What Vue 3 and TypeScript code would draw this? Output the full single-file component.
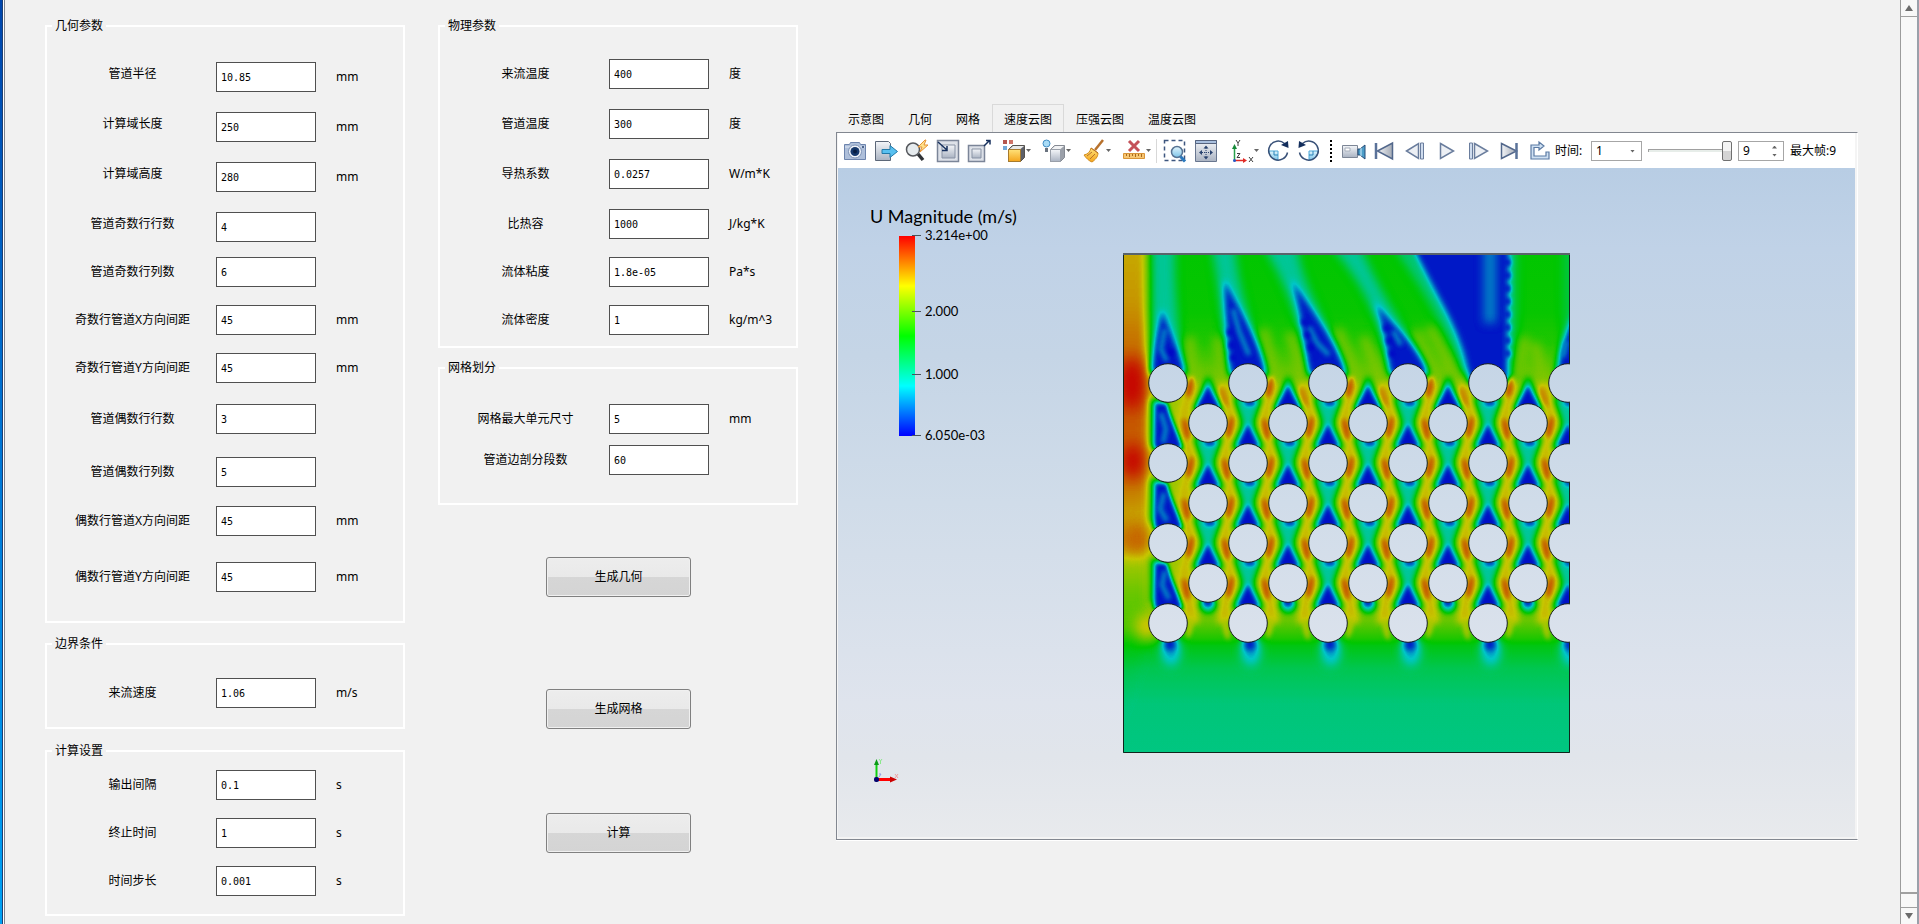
<script setup lang="ts">
import { ref } from 'vue'

interface Field {
  id: string
  label: string
  value: string
  unit?: string
  raised?: boolean
}
interface Group {
  key: string
  title: string
  fields: Field[]
}

const leftGroups = ref<Group[]>([
  {
    key: 'geometry',
    title: '几何参数',
    fields: [
      { id: 'radius', label: '管道半径', value: '10.85', unit: 'mm', raised: true },
      { id: 'length', label: '计算域长度', value: '250', unit: 'mm', raised: true },
      { id: 'height', label: '计算域高度', value: '280', unit: 'mm', raised: true },
      { id: 'odd-rows', label: '管道奇数行行数', value: '4', raised: true },
      { id: 'odd-cols', label: '管道奇数行列数', value: '6' },
      { id: 'odd-dx', label: '奇数行管道X方向间距', value: '45', unit: 'mm' },
      { id: 'odd-dy', label: '奇数行管道Y方向间距', value: '45', unit: 'mm' },
      { id: 'even-rows', label: '管道偶数行行数', value: '3' },
      { id: 'even-cols', label: '管道偶数行列数', value: '5' },
      { id: 'even-dx', label: '偶数行管道X方向间距', value: '45', unit: 'mm' },
      { id: 'even-dy', label: '偶数行管道Y方向间距', value: '45', unit: 'mm' },
    ],
  },
  {
    key: 'boundary',
    title: '边界条件',
    fields: [{ id: 'inlet-v', label: '来流速度', value: '1.06', unit: 'm/s' }],
  },
  {
    key: 'solver',
    title: '计算设置',
    fields: [
      { id: 'interval', label: '输出间隔', value: '0.1', unit: 's' },
      { id: 'end-time', label: '终止时间', value: '1', unit: 's' },
      { id: 'step', label: '时间步长', value: '0.001', unit: 's' },
    ],
  },
])

const midGroups = ref<Group[]>([
  {
    key: 'physics',
    title: '物理参数',
    fields: [
      { id: 'inlet-t', label: '来流温度', value: '400', unit: '度' },
      { id: 'pipe-t', label: '管道温度', value: '300', unit: '度' },
      { id: 'conduct', label: '导热系数', value: '0.0257', unit: 'W/m*K' },
      { id: 'heat', label: '比热容', value: '1000', unit: 'J/kg*K' },
      { id: 'viscosity', label: '流体粘度', value: '1.8e-05', unit: 'Pa*s' },
      { id: 'density', label: '流体密度', value: '1', unit: 'kg/m^3' },
    ],
  },
  {
    key: 'mesh',
    title: '网格划分',
    fields: [
      { id: 'cell', label: '网格最大单元尺寸', value: '5', unit: 'mm' },
      { id: 'segments', label: '管道边剖分段数', value: '60' },
    ],
  },
])

const tabs = ['示意图', '几何', '网格', '速度云图', '压强云图', '温度云图']
const activeTab = ref('速度云图')
const frame = ref(9)
const frameText = ref('9')
const timeValue = ref('1')

/* Scalar field: shapes are painted in grey levels, then a transfer table turns grey into the rainbow map. */
const tone = (v: number): string => {
  const n = Math.round(v * 255)
  return `rgb(${n},${n},${n})`
}
const vertical = (stops: [number, number][]) => stops.map(([o, v]) => ({ offset: o, color: tone(v) }))

const baseStops = vertical([
  [0, 0.5], [0.12, 0.51], [0.18, 0.54], [0.23, 0.62], [0.28, 0.7], [0.7, 0.7], [0.74, 0.62],
  [0.77, 0.54], [0.785, 0.48], [0.83, 0.4], [0.9, 0.348], [1, 0.338],
])
const wallStops = vertical([
  [0, 0.79], [0.1, 0.81], [0.2, 0.87], [0.3, 0.9], [0.46, 0.86], [0.52, 0.8], [0.58, 0.84],
  [0.62, 0.7], [0.68, 0.63], [0.75, 0.6], [0.78, 0.5], [0.84, 0.4], [0.92, 0.345], [1, 0.338],
])

interface Tube { x: number; y: number }
const oddX = [45, 125, 205, 285, 365, 445]
const oddY = [130, 210, 290, 370]
const evenX = [85, 165, 245, 325, 405]
const evenY = [170, 250, 330]
const tubes: Tube[] = [
  ...oddY.flatMap((y) => oddX.map((x) => ({ x, y }))),
  ...evenY.flatMap((y) => evenX.map((x) => ({ x, y }))),
]
const wakes: Tube[] = [
  ...[170, 250, 330].flatMap((y) => oddX.slice(1).map((x) => ({ x, y }))),
  ...[210, 290].flatMap((y) => evenX.map((x) => ({ x, y }))),
]
const hotSpots = tubes.flatMap((t) => {
  const spots: { x: number; y: number; v: number; turn: number }[] = []
  const last = t.y === 370
  const first = t.y === 130
  const v = last ? 0.72 : 0.9
  if (t.x > 50 && !first) spots.push({ x: t.x - 22, y: t.y + 6, v, turn: -12 })
  if (t.x < 440) spots.push({ x: t.x + 22, y: t.y + 4, v, turn: 12 })
  if (first && t.x > 50) spots.push({ x: t.x - 24, y: t.y + 14, v: 0.84, turn: -20 })
  return spots
})
const channels = Array.from({ length: 10 }, (_, k) => {
  const m = 65 + 40 * k
  let d = ''
  for (let i = 0; i <= 6; i++) {
    const y = 370 - 40 * i
    const nearLeft = (k % 2 === 0) === (i % 2 === 0)
    const x = nearLeft ? m + 4 : m - 4
    if (i === 0) d = `M${x} ${y}`
    else {
      const px = nearLeft ? m - 4 : m + 4
      d += ` C${px} ${y + 26} ${x} ${y + 14} ${x} ${y}`
    }
  }
  return d
})
const plumes = [
  'M39 56 C36 72 31 92 28 120 L63 120 C56 98 47 78 39 56Z',
  'M101 26 C101 55 105 85 107 122 L144 122 C138 90 116 55 101 26Z',
  'M168 26 C176 52 181 85 186 122 L224 122 C216 92 188 55 168 26Z',
  'M251 48 C260 70 264 90 267 122 L306 122 C298 96 270 72 251 48Z',
  'M286 -12 C300 18 314 42 324 62 C337 88 343 108 346 130 L386 130 C385 90 386 40 387 -12Z',
  'M456 50 C446 72 438 88 433 122 L460 122Z',
]
const streaks = [
  'M28 -10 C30 30 28 60 29 118 L62 118 C56 80 50 40 52 -10Z',
  'M88 -10 C96 30 100 70 104 118 L142 118 C132 80 112 30 112 -10Z',
  'M138 -10 C158 20 176 62 186 118 L222 118 C208 75 176 30 174 -10Z',
  'M205 -10 C238 26 258 66 266 118 L304 118 C290 84 260 50 236 -10Z',
]
const flecks = [
  'M42 76 L38 96 L44 108', 'M110 56 L116 78 L126 102', 'M186 74 L194 90 L206 102',
  'M270 78 L278 92', 'M444 88 L440 104', 'M38 160 L43 176 L40 190', 'M41 240 L37 256 L44 268',
  'M42 318 L39 332 L46 346',
]
const darkFlecks = ['M47 96 L52 108', 'M106 76 L110 108', 'M180 66 L190 104', 'M262 72 L270 106', 'M385 6 V110']
const ticks = [
  { y: 0, text: '3.214e+00' },
  { y: 76, text: '2.000' },
  { y: 139, text: '1.000' },
  { y: 200, text: '6.050e-03' },
]
</script>

<template>
  <div class="app">
    <div class="window-edge"></div>
    <main class="content">
      <form class="column" @submit.prevent>
        <fieldset v-for="g in leftGroups" :key="g.key" class="group" :class="g.key">
          <legend>{{ g.title }}</legend>
          <div class="rows">
            <template v-for="f in g.fields" :key="f.id">
              <label :for="f.id" :class="{ raised: f.raised }">{{ f.label }}</label>
              <input :id="f.id" v-model="f.value" type="text" />
              <span class="unit">{{ f.unit }}</span>
            </template>
          </div>
        </fieldset>
      </form>

      <div class="column">
        <fieldset v-for="g in midGroups" :key="g.key" class="group" :class="g.key">
          <legend>{{ g.title }}</legend>
          <div class="rows">
            <template v-for="f in g.fields" :key="f.id">
              <label :for="f.id">{{ f.label }}</label>
              <input :id="f.id" v-model="f.value" type="text" />
              <span class="unit">{{ f.unit }}</span>
            </template>
          </div>
        </fieldset>
        <div class="actions">
          <button type="button">生成几何</button>
          <button type="button">生成网格</button>
          <button type="button">计算</button>
        </div>
      </div>

      <section class="viewer">
        <div class="tabs" role="tablist">
          <button
            v-for="t in tabs"
            :key="t"
            type="button"
            role="tab"
            :aria-selected="t === activeTab"
            :class="{ active: t === activeTab }"
            @click="activeTab = t"
          >{{ t }}</button>
        </div>

        <div class="frame">
          <div class="toolbar">
            <svg class="defs" width="0" height="0" aria-hidden="true">
              <defs>
                <linearGradient id="steel" x1="0" y1="0" x2="0" y2="1">
                  <stop offset="0" stop-color="#f4f6f9" /><stop offset="1" stop-color="#aab3c2" />
                </linearGradient>
                <linearGradient id="gold" x1="0" y1="0" x2="0" y2="1">
                  <stop offset="0" stop-color="#ffe27a" /><stop offset="1" stop-color="#f4a51c" />
                </linearGradient>
                <linearGradient id="sky" x1="0" y1="0" x2="0" y2="1">
                  <stop offset="0" stop-color="#e3f5fd" /><stop offset="1" stop-color="#7cc4e8" />
                </linearGradient>
                <linearGradient id="side" x1="0" y1="0" x2="1" y2="0">
                  <stop offset="0" stop-color="#f2f4f7" /><stop offset="1" stop-color="#a4aab5" />
                </linearGradient>
              </defs>
            </svg>
            <div class="tools">
              <button type="button" class="tool" aria-label="截图">
                <svg viewBox="0 0 24 24">
                  <path d="M1.500 5.500h5l1-2h9l1 2h5v15h-21z" fill="#aebfda" stroke="#6d84ad" />
                  <path d="M2 8h20" stroke="#dfe7f3" />
                  <circle cx="12" cy="12.500" r="6.500" fill="#f0f4fa" stroke="#7f93b6" />
                  <circle cx="12" cy="12.500" r="4.500" fill="#16386c" />
                  <circle cx="12" cy="12.500" r="2" fill="#071d42" />
                  <circle cx="20" cy="8" r="1" fill="#24406f" />
                </svg>
              </button>
              <button type="button" class="tool" aria-label="导出">
                <svg viewBox="0 0 24 24">
                  <path d="M1.500 2.500h13l2 2v17h-15z" fill="url(#steel)" stroke="#5c6778" />
                  <path d="M8 10.500h8v-4l7.500 6-7.500 6v-4h-8z" fill="#58c0f0" stroke="#2279a8" />
                </svg>
              </button>
              <button type="button" class="tool" aria-label="快速缩放">
                <svg viewBox="0 0 24 24">
                  <path d="M13 15l5 6" stroke="#303236" stroke-width="3.500" />
                  <circle cx="8" cy="10.500" r="6.500" fill="#e6ebee" stroke="#55585d" stroke-width="1.500" />
                  <path d="M20 1l-7 7h4l-2 5 8-7h-4l2-5z" fill="#ffe08a" stroke="#e59136" />
                </svg>
              </button>
              <button type="button" class="tool" aria-label="缩小视图">
                <svg viewBox="0 0 24 24">
                  <path d="M1.500 1.500h21v21h-21z" fill="#dde1e8" stroke="#7b8598" stroke-width="1.500" />
                  <path d="M6 6h13v13h-13z" fill="url(#steel)" stroke="#8993a5" />
                  <path d="M2 3l9 8M11 7v4.500h-5" fill="none" stroke="#17315e" stroke-width="1.500" />
                </svg>
              </button>
              <button type="button" class="tool" aria-label="放大视图">
                <svg viewBox="0 0 24 24">
                  <path d="M1.500 6.500h16v16h-16z" fill="#dde1e8" stroke="#7b8598" stroke-width="1.500" />
                  <path d="M5 10h9v9h-9z" fill="url(#steel)" stroke="#8993a5" />
                  <path d="M17 7l5-5M19 1.500h4v4" fill="none" stroke="#17315e" stroke-width="1.500" />
                </svg>
              </button>
            </div>

            <div class="tools menus">
              <button type="button" class="tool menu" aria-label="着色">
                <svg viewBox="0 0 24 24">
                  <rect x="1" y="1" width="4" height="4" fill="#b4564d" /><rect x="7" y="1" width="4" height="4" fill="#cf7368" />
                  <rect x="1" y="7" width="4" height="4" fill="#72a9d8" />
                  <path d="M6.500 10.500l4-4h12v12l-4 4h-12z" fill="#5d6069" stroke="#55524e" />
                  <path d="M7 10.500l4-3.500h11l-4 3.500z" fill="#e8e8e8" />
                  <path d="M6.500 10.500h12v12h-12z" fill="url(#gold)" stroke="#a77b2d" />
                </svg>
                <i class="caret"></i>
              </button>
              <button type="button" class="tool menu" aria-label="光照">
                <svg viewBox="0 0 24 24">
                  <path d="M8.500 10.500l4-4h10v12l-4 4h-10z" fill="#9ba0a9" stroke="#858a93" />
                  <path d="M9 10.500l4-3.500h9l-4 3.500z" fill="#f1f2f4" />
                  <path d="M8.500 10.500h10v12h-10z" fill="url(#steel)" stroke="#999fa9" />
                  <circle cx="4.500" cy="4.500" r="3.500" fill="#a9dcf7" stroke="#418dc4" />
                  <path d="M3 9h3v4h-3z" fill="#6a737f" />
                </svg>
                <i class="caret"></i>
              </button>
              <button type="button" class="tool menu" aria-label="清除">
                <svg viewBox="0 0 24 24">
                  <path d="M21 1l-8 10" stroke="#b7712c" stroke-width="2.500" />
                  <path d="M2 16c4-1 6-3 7-7l7 5c0 4-3 7-6 9-3-1-6-4-8-7z" fill="url(#gold)" stroke="#d28c1e" />
                  <path d="M5 17l5-4M8 20l5-5M9 9l7 5" stroke="#b7712c" />
                </svg>
                <i class="caret"></i>
              </button>
              <button type="button" class="tool menu" aria-label="删除标尺">
                <svg viewBox="0 0 24 24">
                  <path d="M7 2l10 10M17 2l-10 10" stroke="#c4525a" stroke-width="3" />
                  <path d="M1.500 14.500h21v5h-21z" fill="#f6c673" stroke="#d99437" />
                  <path d="M4.500 15v2M7.500 15v3M10.500 15v2M13.500 15v3M16.500 15v2M19.500 15v3" stroke="#a9691c" />
                </svg>
                <i class="caret"></i>
              </button>
            </div>

            <span class="separator"></span>

            <div class="tools">
              <button type="button" class="tool" aria-label="框选缩放">
                <svg viewBox="0 0 24 24">
                  <path d="M1.500 1.500h20v20h-20z" fill="none" stroke="#3d567f" stroke-width="1.500" stroke-dasharray="4 3" />
                  <circle cx="14" cy="13" r="5.500" fill="url(#sky)" stroke="#577393" stroke-width="1.500" />
                  <path d="M17.500 17.500l4.500 5" stroke="#2b79bd" stroke-width="3" />
                </svg>
              </button>
              <button type="button" class="tool" aria-label="适应窗口">
                <svg viewBox="0 0 24 24">
                  <path d="M1.500 1.500h21v21h-21z" fill="url(#steel)" stroke="#68768f" />
                  <path d="M1.500 1.500h21v3h-21z" fill="#a9c0df" stroke="#56647f" />
                  <path d="M12 6.500l2.500 3h-5zM12 20.500l2.500-3h-5zM5 13.500l3-2.500v5zM19 13.500l-3-2.500v5z" fill="#2b4470" />
                  <path d="M12 9v9M8 13.500h8" stroke="#2b4470" stroke-dasharray="1 1" />
                </svg>
              </button>
            </div>
            <div class="tools axes">
              <button type="button" class="tool menu" aria-label="坐标方向">
                <svg viewBox="0 0 24 24">
                  <path d="M4.500 8v13" stroke="#27a04a" stroke-width="1.500" /><path d="M2 10l2.500-5 2.500 5z" fill="#178a3a" />
                  <path d="M5 21.500h10" stroke="#e02a26" stroke-width="1.500" /><path d="M13 19l4 2.500-4 2.500z" fill="#e02a26" />
                  <circle cx="4.500" cy="21.500" r="1.500" fill="#2457c5" />
                  <path d="M6 1l2 3 2-3M8 4v3M7 14.500h3l-3 4h3M19 18l4 5M23 18l-4 5" fill="none" stroke="#3e3e3e" />
                </svg>
                <i class="caret"></i>
              </button>
            </div>
            <div class="tools">
              <button type="button" class="tool" aria-label="顺时针旋转">
                <svg viewBox="0 0 24 24">
                  <path d="M3 12h9v9c-5 0-9-4-9-9z" fill="url(#sky)" stroke="#4ca8d8" />
                  <path d="M18.500 4.500a9.500 9.500 0 1 0 3 9" fill="none" stroke="#385077" stroke-width="1.500" />
                  <path d="M15 6l7-4 .5 7z" fill="#132e5c" /><path d="M8 12v4h4" fill="none" stroke="#2b84b9" />
                </svg>
              </button>
              <button type="button" class="tool" aria-label="逆时针旋转">
                <svg viewBox="0 0 24 24">
                  <path d="M21 12h-9v9c5 0 9-4 9-9z" fill="url(#sky)" stroke="#4ca8d8" />
                  <path d="M5.500 4.500a9.500 9.500 0 1 1-3 9" fill="none" stroke="#385077" stroke-width="1.500" />
                  <path d="M9 6l-7-4-.5 7z" fill="#132e5c" /><path d="M16 12v4h-4" fill="none" stroke="#2b84b9" />
                </svg>
              </button>
            </div>

            <span class="grip"></span>

            <div class="tools">
              <button type="button" class="tool" aria-label="录制">
                <svg viewBox="0 0 24 24">
                  <path d="M.500 6.500h15v12h-15z" fill="url(#steel)" stroke="#7d8696" /><path d="M3 9h5v3h-5z" fill="#fff" stroke="#a8afbb" />
                  <path d="M16 10h2l5-4v14l-5-4h-2z" fill="#4d9ec9" stroke="#254c78" /><path d="M19 9v8" stroke="#d4eefb" />
                </svg>
              </button>
              <button type="button" class="tool" aria-label="首帧">
                <svg viewBox="0 0 24 24">
                  <path d="M4.500 12l15-8v16z" fill="url(#side)" stroke="#52678b" stroke-width="1.500" />
                  <path d="M3 4v16" stroke="#5a7299" stroke-width="2.500" />
                </svg>
              </button>
              <button type="button" class="tool" aria-label="上一帧">
                <svg viewBox="0 0 24 24">
                  <path d="M2.500 12l12-7.500v15z" fill="#eceff4" stroke="#6a7d9d" stroke-width="1.500" />
                  <path d="M16.500 4h3v16h-3z" fill="#cfdcee" stroke="#6a7d9d" />
                </svg>
              </button>
              <button type="button" class="tool" aria-label="播放">
                <svg viewBox="0 0 24 24">
                  <path d="M5.500 4.500l13 7.500-13 7.500z" fill="#eceff4" stroke="#6a7d9d" stroke-width="1.500" />
                </svg>
              </button>
              <button type="button" class="tool" aria-label="下一帧">
                <svg viewBox="0 0 24 24">
                  <path d="M8.500 4.500l13 7.500-13 7.500z" fill="#eceff4" stroke="#6a7d9d" stroke-width="1.500" />
                  <path d="M3.500 4h3v16h-3z" fill="#cfdcee" stroke="#6a7d9d" />
                </svg>
              </button>
              <button type="button" class="tool" aria-label="末帧">
                <svg viewBox="0 0 24 24">
                  <path d="M4.500 4.500l15 7.500-15 7.500z" fill="url(#side)" stroke="#52678b" stroke-width="1.500" />
                  <path d="M19.500 4v16" stroke="#5a7299" stroke-width="2.500" />
                </svg>
              </button>
              <button type="button" class="tool" aria-label="循环">
                <svg viewBox="0 0 24 24">
                  <path d="M3 6h8v-3l5 4-5 4v-2.500h-5v8.500h12v-4h3v7h-18z" fill="#cfe0f2" stroke="#5b7aa3" stroke-width="1.200" />
                </svg>
              </button>
            </div>

            <div class="playback">
              <label for="time">时间:</label>
              <span class="combo">
                <select id="time" v-model="timeValue"><option>1</option></select>
                <i class="caret"></i>
              </span>
              <input v-model.number="frame" class="slider" type="range" min="0" max="9" aria-label="帧" />
              <span class="spin">
                <input v-model="frameText" type="text" aria-label="当前帧" />
                <i class="up"></i><i class="caret"></i>
              </span>
              <span class="total">最大帧:9</span>
            </div>
          </div>

          <div class="viewport">
            <div class="color-key">
              <h2>U Magnitude (m/s)</h2>
              <svg width="110" height="224" viewBox="0 -8 110 224">
                <defs>
                  <linearGradient id="rainbow" x1="0" y1="0" x2="0" y2="1">
                    <stop offset="0" stop-color="#f00" /><stop offset="0.250" stop-color="#ff0" />
                    <stop offset="0.500" stop-color="#0f0" /><stop offset="0.750" stop-color="#0ff" />
                    <stop offset="1" stop-color="#00f" />
                  </linearGradient>
                </defs>
                <rect x="0" y="8" width="16" height="200" fill="url(#rainbow)" />
                <g v-for="t in ticks" :key="t.text">
                  <path :d="`M13 ${t.y + 7.5}h9`" stroke="#4a545e" />
                  <text x="26" :y="t.y + 12">{{ t.text }}</text>
                </g>
              </svg>
            </div>

            <svg class="plot" width="447" height="500" viewBox="0 0 447 500" role="img" aria-label="速度云图">
              <defs>
                <filter id="rainbow-map" x="0" y="0" width="447" height="500" filterUnits="userSpaceOnUse" color-interpolation-filters="sRGB">
                  <feComponentTransfer>
                    <feFuncR type="table" tableValues="0 0 0 0.78 0.78" />
                    <feFuncG type="table" tableValues="0 0.78 0.78 0.78 0" />
                    <feFuncB type="table" tableValues="0.78 0.78 0 0 0" />
                  </feComponentTransfer>
                </filter>
                <filter v-for="b in [1, 2, 3, 5, 8]" :id="`soft-${b}`" :key="b" x="-60" y="-60" width="567" height="620" filterUnits="userSpaceOnUse" color-interpolation-filters="sRGB">
                  <feGaussianBlur :stdDeviation="b" />
                </filter>
                <linearGradient id="base-field" gradientUnits="userSpaceOnUse" x1="0" y1="0" x2="0" y2="500">
                  <stop v-for="s in baseStops" :key="s.offset" :offset="s.offset" :stop-color="s.color" />
                </linearGradient>
                <linearGradient id="wall-field" gradientUnits="userSpaceOnUse" x1="0" y1="0" x2="0" y2="500">
                  <stop v-for="s in wallStops" :key="s.offset" :offset="s.offset" :stop-color="s.color" />
                </linearGradient>
                <mask id="holes" maskUnits="userSpaceOnUse" x="0" y="0" width="447" height="500">
                  <rect width="447" height="500" fill="#fff" />
                  <circle v-for="t in tubes" :key="`${t.x}-${t.y}`" :cx="t.x" :cy="t.y" r="19.300" fill="#000" />
                </mask>
              </defs>
              <g mask="url(#holes)">
                <g filter="url(#rainbow-map)">
                  <rect width="447" height="500" fill="url(#base-field)" />
                  <g filter="url(#soft-5)">
                    <path v-for="d in streaks" :key="d" :d="d" :fill="tone(0.31)" />
                    <path d="M386 -10V130L393 130V-10Z" :fill="tone(0.35)" />
                    <path d="M440 -10h20v120h-20z" :fill="tone(0.42)" />
                    <path d="M276 -10 C310 40 332 80 344 120" fill="none" :stroke="tone(0.34)" stroke-width="12" />
                  </g>
                  <g filter="url(#soft-5)" fill="none" :stroke="tone(0.66)" stroke-width="9">
                    <path d="M71 140C69 112 67 100 67 84M98 145C102 120 98 105 94 84" />
                    <path d="M151 140C150 112 146 95 140 76M178 145C180 115 174 100 166 80" />
                    <path d="M231 140C232 115 226 100 214 76M258 145C256 120 250 105 240 84" />
                    <path d="M311 140C312 116 304 98 292 78M340 150C332 120 320 96 306 74" />
                    <path d="M391 140C394 120 398 104 402 84M424 145C420 124 416 110 412 90" />
                  </g>
                  <path d="M-40 -40H24V360C24 400 10 430 -40 540Z" fill="url(#wall-field)" filter="url(#soft-5)" />
                  <g filter="url(#soft-8)">
                    <ellipse cx="9" cy="130" rx="13" ry="26" :fill="tone(1)" />
                    <ellipse cx="10" cy="208" rx="12" ry="18" :fill="tone(1)" />
                    <ellipse cx="14" cy="286" rx="12" ry="14" :fill="tone(0.88)" />
                    <ellipse cx="24" cy="374" rx="9" ry="12" :fill="tone(0.86)" />
                  </g>
                  <g filter="url(#soft-3)">
                    <path d="M28 146h12v48h-12zM28 226h12v44h-12zM28 306h12v44h-12z" :fill="tone(0.38)" />
                  </g>
                  <g filter="url(#soft-3)" fill="none" :stroke="tone(0.77)" stroke-width="14">
                    <path v-for="d in channels" :key="d" :d="d" />
                  </g>
                  <g filter="url(#soft-3)">
                    <path
                      v-for="w in wakes" :key="`o${w.x}-${w.y}`" :transform="`translate(${w.x} ${w.y})`" :fill="tone(0.3)"
                      d="M-14 -26C-11 -14 -7 -8 -6 0C-7 8 -12 14 -16 26H16C12 14 7 8 6 0C7 -8 11 -14 14 -26Z"
                    />
                    <path v-for="x in evenX" :key="x" :d="`M${x} 122L${x - 15} 158H${x + 15}Z`" :fill="tone(0.3)" />
                    <ellipse v-for="x in evenX" :key="`c${x}`" :cx="x" cy="351" rx="8" ry="9" :fill="tone(0.24)" />
                  </g>
                  <g filter="url(#soft-3)">
                    <path v-for="d in plumes" :key="d" :d="d" :fill="tone(0.03)" />
                  </g>
                  <g filter="url(#soft-2)">
                    <path
                      v-for="w in wakes" :key="`t${w.x}-${w.y}`" :transform="`translate(${w.x} ${w.y})`" :fill="tone(0.02)"
                      d="M0 0C-3 8 -7 14 -11 24H11C7 14 3 8 0 0Z"
                    />
                    <path v-for="x in evenX" :key="x" :d="`M${x} 131C${x - 3} 140 ${x - 8} 146 ${x - 12} 156H${x + 12}C${x + 8} 146 ${x + 3} 140 ${x} 131Z`" :fill="tone(0.02)" />
                    <path v-for="y in [170, 250, 330]" :key="y" :d="`M32 ${y - 20}L31 ${y + 26}H60C55 ${y + 8} 49 ${y} 44 ${y - 20}Z`" :fill="tone(0.03)" />
                    <ellipse v-for="w in wakes" :key="`s${w.x}-${w.y}`" :cx="w.x + 2" :cy="w.y - 20" rx="6" ry="3" :fill="tone(0.05)" />
                    <ellipse v-for="x in evenX" :key="`e${x}`" :cx="x" cy="350" rx="5" ry="3" :fill="tone(0.02)" />
                  </g>
                  <path d="M367 -10V70" fill="none" :stroke="tone(0.17)" stroke-width="12" filter="url(#soft-5)" />
                  <g filter="url(#soft-2)" fill="none" :stroke="tone(0.17)" stroke-width="5">
                    <path v-for="d in flecks" :key="d" :d="d" />
                  </g>
                  <g filter="url(#soft-2)" fill="none" :stroke="tone(0)" stroke-width="5">
                    <path v-for="d in darkFlecks" :key="d" :d="d" stroke-dasharray="7 6" />
                  </g>
                  <g filter="url(#soft-2)">
                    <ellipse
                      v-for="(h, i) in hotSpots" :key="i" rx="3" ry="11" :fill="tone(h.v)"
                      :transform="`translate(${h.x} ${h.y}) rotate(${h.turn})`"
                    />
                  </g>
                  <g filter="url(#soft-5)">
                    <ellipse v-for="x in oddX" :key="x" :cx="x + 3" cy="398" rx="10" ry="15" :fill="tone(0.22)" />
                  </g>
                  <g filter="url(#soft-3)">
                    <ellipse v-for="x in oddX" :key="x" :cx="x + 2" cy="391" rx="6" ry="7" :fill="tone(0.02)" />
                  </g>
                </g>
                <path d="M.5 1V499.500H446.500V1" fill="none" stroke="#10251c" />
                <path d="M0 1h447" stroke="#59636b" stroke-width="2" />
              </g>
              <circle v-for="t in tubes" :key="`r${t.x}-${t.y}`" :cx="t.x" :cy="t.y" r="19.300" fill="none" stroke="#161c1c" />
            </svg>

            <svg class="triad" width="30" height="30" viewBox="0 0 30 30" aria-hidden="true">
              <path d="M6.500 22V6" stroke="#10d010" stroke-width="2" /><path d="M4 8l2.500-6 2.500 6z" fill="#0c9a18" />
              <path d="M7 22.500h15" stroke="#f00" stroke-width="3" /><path d="M20 19.500l7 3-7 3z" fill="#c00" />
              <path d="M9 2l1.500 2 1.500-2M10.500 4v3" fill="none" stroke="#8be88b" />
              <path d="M25 17l3 4M28 17l-3 4" stroke="#f0a0a0" /><path d="M9 17h2l-2 3" fill="none" stroke="#8f9ae0" />
              <rect x="4" y="20" width="5" height="5" rx="2" fill="#04046e" />
            </svg>
          </div>
        </div>
      </section>
    </main>

    <div class="scrollbar" aria-hidden="true">
      <span class="arrow"><svg viewBox="0 0 8 6"><path d="M4 0l4 6h-8z" fill="#6b6b6b" /></svg></span>
      <span class="thumb"></span>
      <span class="track"></span>
      <span class="arrow"><svg viewBox="0 0 8 6"><path d="M0 0h8l-4 6z" fill="#6b6b6b" /></svg></span>
    </div>
  </div>
</template>

<style>
body {
  margin: 0;
  background: #f1f1f1;
}
</style>

<style scoped>
.app {
  display: flex;
  min-height: 100vh;
  background: #f1f1f1;
  color: #000;
  font: 12px/18px "Noto Sans", "Noto Sans CJK SC", sans-serif;
}
.app * {
  box-sizing: border-box;
}
button,
input,
select {
  margin: 0;
  padding: 0;
  color: #000;
  font: inherit;
}
.window-edge {
  flex: none;
  width: 5px;
  border-right: 1px solid #7d8490;
  background: linear-gradient(90deg, transparent 2px, #1d3f73 2px 3px, #fff 3px), linear-gradient(#0046ad, #0078d7 50%, #00a2f5);
}
.content {
  display: flex;
  flex: 1;
  min-width: 0;
  padding: 17px 42px 8px 40px;
}
.column {
  flex: none;
  width: 360px;
  margin-right: 33px;
}

.group {
  min-width: 0;
  margin: 0;
  padding: 0 2px;
  border: 2px solid #fff;
}
.group legend {
  height: 18px;
  margin-left: 3px;
  padding: 0 3px;
}
.rows {
  display: grid;
  grid-template-columns: 167px 100px 1fr;
  align-items: end;
}
.rows label {
  line-height: 30px;
  text-align: center;
}
.rows label.raised {
  line-height: 36px;
}
.rows input {
  width: 100%;
  height: 30px;
  padding: 0 4px;
  border: 1px solid #505050;
  background: #fff;
  font: 10px/28px "DejaVu Sans Mono", monospace;
}
.unit {
  padding-left: 20px;
  line-height: 30px;
}
.geometry {
  margin-bottom: 12px;
  padding-bottom: 29px;
}
.geometry .rows {
  grid-template-rows: 57px 50px 50px 50px 45px 48px 48px 51px 53px 49px 56px;
}
.boundary {
  margin-bottom: 13px;
  padding-bottom: 19px;
}
.boundary .rows {
  grid-template-rows: 55px;
}
.solver {
  padding-bottom: 18px;
}
.solver .rows {
  grid-template-rows: 40px 48px 48px;
}
.physics {
  margin-bottom: 11px;
  padding-bottom: 11px;
}
.physics .rows {
  grid-template-rows: 54px 50px 50px 50px 48px 48px;
}
.mesh {
  padding-bottom: 28px;
}
.mesh .rows {
  grid-template-rows: 57px 41px;
}

.actions {
  display: grid;
  grid-template-rows: 132px 124px 40px;
  padding: 52px 0 0 108px;
}
.actions button {
  width: 145px;
  height: 40px;
  border: 1px solid #808080;
  border-radius: 3px;
  background: linear-gradient(#ededed, #e9e9e9 50%, #d6d6d6 50%, #d4d4d4);
  box-shadow: inset 0 0 0 1px #f0f0f0;
}

.viewer {
  display: flex;
  flex: 1;
  flex-direction: column;
  min-width: 0;
  margin-left: 5px;
  padding: 87px 0 76px;
}
.tabs {
  display: flex;
  flex: none;
  height: 28px;
}
.tabs button {
  padding: 2px 11px 0;
  border: 1px solid transparent;
  border-bottom: 0;
  background: none;
  white-space: nowrap;
}
.tabs .active {
  border-color: #d9d9d9;
}
.frame {
  display: flex;
  flex: 1;
  flex-direction: column;
  padding: 0 2px 2px 1px;
  border: 1px solid #828790;
  border-right-color: #fff;
  background: #f4f4f4;
  box-shadow: 0 1px #fff;
}
.toolbar {
  display: flex;
  align-items: center;
  min-height: 35px;
  padding-left: 1px;
  background: #fff;
}
.defs {
  position: absolute;
}
.tools {
  display: flex;
  flex: none;
}
.tool {
  display: flex;
  align-items: center;
  justify-content: center;
  width: 31px;
  height: 28px;
  border: 0;
  background: none;
}
.tool svg {
  flex: none;
  width: 24px;
  height: 24px;
}
.menus {
  gap: 11px;
  margin-left: 8px;
}
.menu {
  width: 29px;
}
.axes {
  margin: 0 3px 0 9px;
}
.caret,
.up {
  flex: none;
  width: 5px;
  height: 3px;
  background: #666;
  clip-path: polygon(0 0, 100% 0, 50% 100%);
}
.up {
  clip-path: polygon(50% 0, 100% 100%, 0 100%);
}
.separator {
  flex: none;
  width: 1px;
  height: 24px;
  margin: 0 2px 0 5px;
  background: #d8d8d8;
}
.grip {
  flex: none;
  width: 2px;
  height: 22px;
  margin: 0 6px;
  background: repeating-linear-gradient(#000 0 2px, transparent 2px 4px);
}
.playback {
  display: flex;
  flex: none;
  align-items: center;
  white-space: nowrap;
}
.playback label {
  width: 36px;
}
.combo,
.spin {
  display: flex;
  position: relative;
  height: 20px;
  border: 1px solid #a6a6a6;
  background: #fff;
}
.combo {
  width: 51px;
}
.combo select {
  width: 100%;
  padding-left: 4px;
  border: 0;
  background: none;
  appearance: none;
}
.combo .caret,
.spin .caret,
.spin .up {
  position: absolute;
  right: 6px;
  top: 8px;
  pointer-events: none;
}
.slider {
  width: 84px;
  height: 20px;
  margin: 0 6px;
  background: none;
  appearance: none;
}
.slider::-webkit-slider-runnable-track {
  height: 3px;
  border-top: 1px solid #a0a0a0;
  border-left: 1px solid #a0a0a0;
  background: #e7ede9;
}
.slider::-webkit-slider-thumb {
  width: 10px;
  height: 20px;
  margin-top: -9px;
  border: 1px solid #707070;
  border-radius: 2px;
  background: linear-gradient(#f4f4f4 50%, #d4d4d4 50%);
  appearance: none;
}
.spin {
  width: 46px;
}
.spin input {
  width: 28px;
  padding-left: 4px;
  border: 0;
  background: none;
}
.spin .up {
  top: 4px;
}
.spin .caret {
  top: 12px;
}
.total {
  margin-left: 6px;
}

.viewport {
  display: grid;
  flex: 1;
  position: relative;
  place-items: center;
  overflow: hidden;
  background: linear-gradient(#b8cde4, #c0d2e7 12%, #c5d5e6 28%, #d0dce9 50%, #dfe4ed 80%, #e1e5eb 88%, #e8eaed);
}
.color-key {
  position: absolute;
  top: 36px;
  left: 32px;
}
.color-key h2 {
  margin: 0;
  font: 18px/24px Lato, sans-serif;
  white-space: nowrap;
}
.color-key svg {
  display: block;
  margin: -8px 0 0 29px;
}
.color-key text {
  font: 13px Lato, sans-serif;
}
.plot {
  display: block;
}
.triad {
  position: absolute;
  bottom: 50px;
  left: 32px;
}

.scrollbar {
  display: flex;
  flex: none;
  flex-direction: column;
  width: 19px;
  border-right: 2px solid #9aa0aa;
  border-left: 1px solid #9c9c9c;
  background: #f8f8f8;
}
.arrow {
  display: flex;
  flex: none;
  align-items: center;
  justify-content: center;
  height: 16px;
}
.arrow svg {
  width: 8px;
  height: 6px;
}
.thumb {
  flex: 1;
  border: solid #a0a0a0;
  border-width: 1px 0 2px;
}
.track {
  flex: none;
  height: 14px;
  border-bottom: 1px solid #a0a0a0;
}

@media (max-width: 1860px) {
  .toolbar {
    flex-wrap: wrap;
  }
}
</style>
